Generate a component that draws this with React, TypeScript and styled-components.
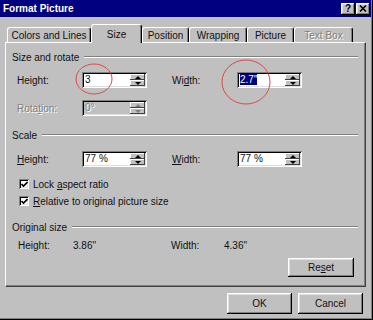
import styled, { createGlobalStyle, css } from "styled-components";

const GlobalStyle = createGlobalStyle`
  html, body {
    margin: 0;
    padding: 0;
    background: #c0c0c0;
  }
  body {
    font-family: "Liberation Sans", Arial, sans-serif;
    font-size: 10px;
    color: #111;
  }
`;

const raised = css`
  box-shadow: inset -1px -1px #000, inset 1px 1px #fff, inset -2px -2px #808080,
    inset 2px 2px #dfdfdf;
`;

const sunken = css`
  box-shadow: inset 1px 1px #808080, inset -1px -1px #fff, inset 2px 2px #000,
    inset -2px -2px #dfdfdf;
`;

const etched = css`
  color: #808080;
  text-shadow: 1px 1px #fff;
`;

const Window = styled.div`
  position: relative;
  width: 373px;
  height: 320px;
  box-sizing: border-box;
  padding: 0 2px 2px 0;
  background: #c0c0c0;
  box-shadow: inset -1px -1px #000, inset -2px -2px #808080;
  display: flex;
  flex-direction: column;
`;

const TitleBar = styled.div`
  height: 17px;
  background: #000080;
  color: #fff;
  display: flex;
  align-items: center;
  justify-content: space-between;
  padding: 0 1px 0 3px;
  font-weight: bold;
  font-size: 10px;
`;

const TitleButtons = styled.div`
  display: flex;
  gap: 1px;
`;

const TitleButton = styled.div`
  width: 14px;
  height: 12px;
  box-sizing: border-box;
  background: #c0c0c0;
  color: #000;
  ${raised};
  display: flex;
  align-items: center;
  justify-content: center;
  font-size: 10px;
  font-weight: bold;
  line-height: 1;
`;

const TabStrip = styled.div`
  margin-top: 7px;
  height: 18px;
  padding-left: 7px;
  display: flex;
  align-items: flex-end;
`;

const Tab = styled.div<{ $w: number; $active?: boolean; $disabled?: boolean }>`
  position: relative;
  width: ${(p) => p.$w}px;
  height: ${(p) => (p.$active ? 19 : 15)}px;
  margin-bottom: ${(p) => (p.$active ? -1 : 0)}px;
  z-index: ${(p) => (p.$active ? 1 : 0)};
  box-sizing: border-box;
  background: #c0c0c0;
  border-top: 1px solid #fff;
  border-left: 1px solid #fff;
  border-right: 1px solid #000;
  border-radius: 3px 3px 0 0;
  box-shadow: inset -1px 0 #808080;
  display: flex;
  align-items: center;
  justify-content: center;
  white-space: nowrap;
  ${(p) => p.$disabled && etched};
`;

const Panel = styled.div`
  margin-left: 5px;
  width: 361px;
  height: 245px;
  box-sizing: border-box;
  border-top: 1px solid #fff;
  border-left: 1px solid #fff;
  border-right: 1px solid #404040;
  border-bottom: 1px solid #404040;
  box-shadow: inset -1px -1px #808080;
  padding: 8px 0 0 0;
  display: flex;
  flex-direction: column;
`;

const GroupHeader = styled.div<{ $mt?: number }>`
  margin-top: ${(p) => p.$mt ?? 0}px;
  height: 12px;
  padding: 0 7px 0 6px;
  display: flex;
  align-items: center;
  gap: 5px;
  white-space: nowrap;

  &::after {
    content: "";
    flex: 1;
    height: 0;
    border-top: 1px solid #808080;
    border-bottom: 1px solid #fff;
  }
`;

const FieldRow = styled.div<{ $mt: number }>`
  margin-top: ${(p) => p.$mt}px;
  padding-left: 11px;
  display: flex;
  align-items: center;
  height: 16px;
`;

const Label = styled.span<{ $w: number; $disabled?: boolean }>`
  width: ${(p) => p.$w}px;
  flex: none;
  ${(p) => p.$disabled && etched};
`;

const Spacer = styled.span<{ $w: number }>`
  width: ${(p) => p.$w}px;
  flex: none;
`;

const SpinBox = styled.div<{ $disabled?: boolean }>`
  width: 65px;
  height: 16px;
  box-sizing: border-box;
  padding: 2px;
  display: flex;
  background: ${(p) => (p.$disabled ? "#c0c0c0" : "#fff")};
  ${sunken};
`;

const SpinValue = styled.div<{ $disabled?: boolean }>`
  flex: 1;
  padding-left: 1px;
  line-height: 12px;
  white-space: nowrap;
  ${(p) => p.$disabled && etched};
`;

const Selected = styled.span`
  background: #000080;
  color: #fff;
`;

const SpinButtons = styled.div`
  width: 15px;
  display: flex;
  flex-direction: column;
`;

const SpinHalf = styled.div`
  flex: 1;
  background: #c0c0c0;
  box-shadow: inset -1px -1px #404040, inset 1px 1px #fff;
  display: flex;
  align-items: center;
  justify-content: center;
`;

const Arrow = styled.span<{ $down?: boolean; $disabled?: boolean }>`
  width: 0;
  height: 0;
  border-left: 3px solid transparent;
  border-right: 3px solid transparent;
  ${(p) =>
    p.$down
      ? css`border-top: 3px solid ${p.$disabled ? "#808080" : "#000"};`
      : css`border-bottom: 3px solid ${p.$disabled ? "#808080" : "#000"};`}
`;

const CheckRow = styled.div<{ $mt: number }>`
  margin-top: ${(p) => p.$mt}px;
  padding-left: 13px;
  height: 12px;
  display: flex;
  align-items: center;
  gap: 4px;
`;

const CheckBox = styled.span`
  width: 10px;
  height: 10px;
  box-sizing: border-box;
  background: #fff;
  ${sunken};
  display: inline-flex;
  align-items: center;
  justify-content: center;
`;

const InfoRow = styled.div<{ $mt: number }>`
  margin-top: ${(p) => p.$mt}px;
  padding-left: 12px;
  height: 12px;
  display: flex;
  align-items: center;
`;

const ButtonRow = styled.div<{ $mt: number; $pr: number }>`
  margin-top: ${(p) => p.$mt}px;
  padding-right: ${(p) => p.$pr}px;
  display: flex;
  justify-content: flex-end;
  gap: 6px;
`;

const PushButton = styled.div<{ $w: number; $h: number }>`
  width: ${(p) => p.$w}px;
  height: ${(p) => p.$h}px;
  box-sizing: border-box;
  background: #c0c0c0;
  ${raised};
  display: flex;
  align-items: center;
  justify-content: center;
`;

const Overlay = styled.svg`
  position: absolute;
  left: 0;
  top: 0;
  pointer-events: none;
`;

const Spinner = ({
  value,
  disabled,
}: {
  value: React.ReactNode;
  disabled?: boolean;
}) => (
  <SpinBox $disabled={disabled}>
    <SpinValue $disabled={disabled}>{value}</SpinValue>
    <SpinButtons>
      <SpinHalf>
        <Arrow $disabled={disabled} />
      </SpinHalf>
      <SpinHalf>
        <Arrow $down $disabled={disabled} />
      </SpinHalf>
    </SpinButtons>
  </SpinBox>
);

const Check = ({ children }: { children: React.ReactNode }) => (
  <>
    <CheckBox>
      <svg width="7" height="7" viewBox="0 0 7 7">
        <path d="M0.5 3 L2.5 5 L6.5 1" stroke="#000" strokeWidth="1.6" fill="none" />
      </svg>
    </CheckBox>
    <span>{children}</span>
  </>
);

const tabs = [
  { label: "Colors and Lines", w: 84 },
  { label: "Size", w: 51, active: true },
  { label: "Position", w: 47 },
  { label: "Wrapping", w: 58 },
  { label: "Picture", w: 47 },
  { label: "Text Box", w: 59, disabled: true },
];

export default function App() {
  return (
    <>
      <GlobalStyle />
      <Window>
        <TitleBar>
          <span>Format Picture</span>
          <TitleButtons>
            <TitleButton>?</TitleButton>
            <TitleButton>
              <svg width="8" height="7" viewBox="0 0 8 7">
                <path d="M1 0.5 L7 6.5 M7 0.5 L1 6.5" stroke="#000" strokeWidth="1.6" />
              </svg>
            </TitleButton>
          </TitleButtons>
        </TitleBar>

        <TabStrip>
          {tabs.map((t) => (
            <Tab key={t.label} $w={t.w} $active={t.active} $disabled={t.disabled}>
              {t.label}
            </Tab>
          ))}
        </TabStrip>

        <Panel>
          <GroupHeader>Size and rotate</GroupHeader>
          <FieldRow $mt={9}>
            <Label $w={65}>
              Hei<u>g</u>ht:
            </Label>
            <Spinner value="3" />
            <Spacer $w={25} />
            <Label $w={65}>
              Wi<u>d</u>th:
            </Label>
            <Spinner value={<Selected>2.7"</Selected>} />
          </FieldRow>
          <FieldRow $mt={12}>
            <Label $w={65} $disabled>
              Rota<u>t</u>ion:
            </Label>
            <Spinner value="0°" disabled />
          </FieldRow>

          <GroupHeader $mt={13}>Scale</GroupHeader>
          <FieldRow $mt={10}>
            <Label $w={65}>
              <u>H</u>eight:
            </Label>
            <Spinner value="77 %" />
            <Spacer $w={25} />
            <Label $w={65}>
              <u>W</u>idth:
            </Label>
            <Spinner value="77 %" />
          </FieldRow>
          <CheckRow $mt={11}>
            <Check>
              Lock <u>a</u>spect ratio
            </Check>
          </CheckRow>
          <CheckRow $mt={5}>
            <Check>
              <u>R</u>elative to original picture size
            </Check>
          </CheckRow>

          <GroupHeader $mt={14}>Original size</GroupHeader>
          <InfoRow $mt={6}>
            <Label $w={55}>Height:</Label>
            <Label $w={98}>3.86"</Label>
            <Label $w={53}>Width:</Label>
            <Label $w={50}>4.36"</Label>
          </InfoRow>
          <ButtonRow $mt={7} $pr={11}>
            <PushButton $w={66} $h={19}>
              Re<u>s</u>et
            </PushButton>
          </ButtonRow>
        </Panel>

        <ButtonRow $mt={6} $pr={8}>
          <PushButton $w={65} $h={21}>
            OK
          </PushButton>
          <PushButton $w={65} $h={21}>
            Cancel
          </PushButton>
        </ButtonRow>

        <Overlay width="373" height="320">
          <ellipse cx="94" cy="79" rx="18" ry="15" stroke="#e04848" strokeWidth="1" fill="none" />
          <ellipse cx="246" cy="82" rx="24" ry="22" stroke="#e04848" strokeWidth="1" fill="none" />
        </Overlay>
      </Window>
    </>
  );
}
